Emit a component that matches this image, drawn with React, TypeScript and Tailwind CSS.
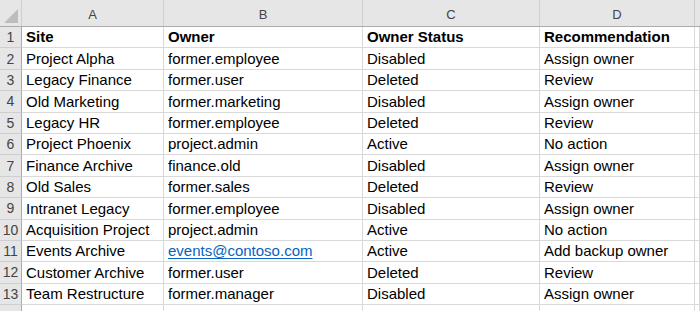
const rows: [string, string, string, string][] = [
  ["Project Alpha", "former.employee", "Disabled", "Assign owner"],
  ["Legacy Finance", "former.user", "Deleted", "Review"],
  ["Old Marketing", "former.marketing", "Disabled", "Assign owner"],
  ["Legacy HR", "former.employee", "Deleted", "Review"],
  ["Project Phoenix", "project.admin", "Active", "No action"],
  ["Finance Archive", "finance.old", "Disabled", "Assign owner"],
  ["Old Sales", "former.sales", "Deleted", "Review"],
  ["Intranet Legacy", "former.employee", "Disabled", "Assign owner"],
  ["Acquisition Project", "project.admin", "Active", "No action"],
  ["Events Archive", "events@contoso.com", "Active", "Add backup owner"],
  ["Customer Archive", "former.user", "Deleted", "Review"],
  ["Team Restructure", "former.manager", "Disabled", "Assign owner"],
];

const cols = ["A", "B", "C", "D"];
const grid = "grid grid-cols-[22px_142px_199px_177px_155px_1fr]";

function Cell({ children, bold, link }: { children?: React.ReactNode; bold?: boolean; link?: boolean }) {
  return (
    <div
      className={`flex items-end pb-[1px] pl-[4px] border-r border-b border-[#d9d9d9] whitespace-nowrap overflow-hidden ${
        bold ? "font-bold" : ""
      } ${link ? "text-[#0563c1] underline underline-offset-2" : "text-black"}`}
    >
      {children}
    </div>
  );
}

function RowNum({ n }: { n?: number }) {
  return (
    <div className="flex items-center justify-center bg-[#e6e6e6] border-r border-b border-r-[#ababab] border-b-[#cfcfcf] text-[14px] text-[#444]">
      {n}
    </div>
  );
}

export default function App() {
  return (
    <div
      className="w-[700px] h-[311px] overflow-hidden bg-white text-[15px] leading-[18px]"
      style={{ fontFamily: '"Liberation Sans", Arial, sans-serif' }}
    >
      {/* column header */}
      <div className={`${grid} h-[27px] bg-[#e6e6e6] border-b border-[#ababab]`}>
        <div className="relative border-r border-[#cfcfcf]">
          <div className="absolute right-[3px] bottom-[3px] w-0 h-0 border-l-[14px] border-l-transparent border-b-[14px] border-b-[#bdbdbd]" />
        </div>
        {cols.map((c) => (
          <div key={c} className="flex items-center justify-center pt-[4px] text-[13px] text-[#444] border-r border-[#cfcfcf]">
            {c}
          </div>
        ))}
        <div />
      </div>

      {/* header row */}
      <div className={`${grid} h-[21.4px]`}>
        <RowNum n={1} />
        <Cell bold>Site</Cell>
        <Cell bold>Owner</Cell>
        <Cell bold>Owner Status</Cell>
        <Cell bold>Recommendation</Cell>
        <Cell />
      </div>

      {rows.map((r, i) => (
        <div key={i} className={`${grid} h-[21.4px]`}>
          <RowNum n={i + 2} />
          <Cell>{r[0]}</Cell>
          <Cell link={r[1].includes("@")}>{r[1]}</Cell>
          <Cell>{r[2]}</Cell>
          <Cell>{r[3]}</Cell>
          <Cell />
        </div>
      ))}

      {/* partly visible next row */}
      <div className={`${grid} h-[21.4px]`}>
        <RowNum />
        <Cell />
        <Cell />
        <Cell />
        <Cell />
        <Cell />
      </div>
    </div>
  );
}
